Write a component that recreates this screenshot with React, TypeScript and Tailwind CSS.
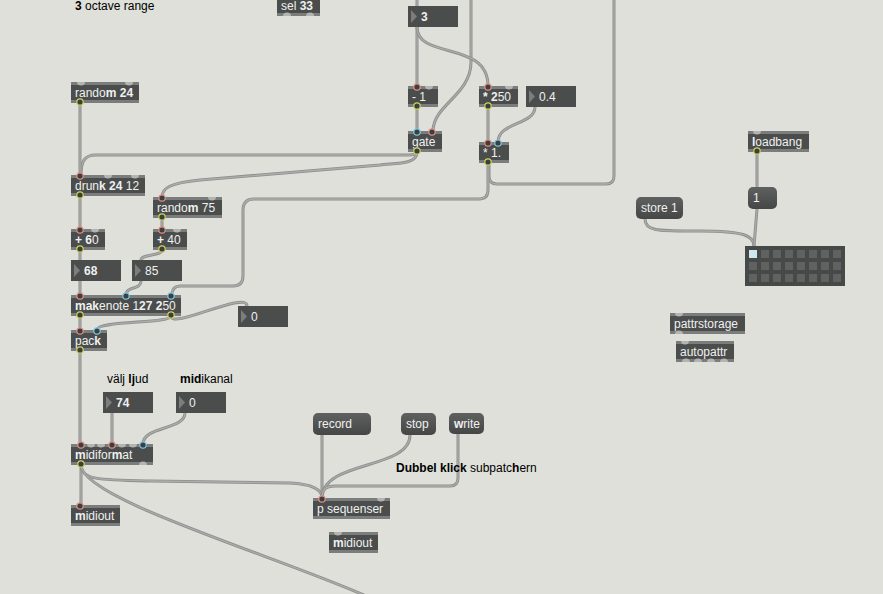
import React from 'react';

type Port = [number, 'g' | 'r' | 'b' | 'y'];

type Node = {
  x: number;
  y: number;
  w: number;
  h?: number;
  kind: 'obj' | 'num' | 'msg';
  label: React.ReactNode;
  ins?: Port[];
  outs?: Port[];
};

const B = ({ children }: { children: React.ReactNode }) => <span className="font-bold">{children}</span>;

const nodes: Node[] = [
  { x: 277, y: -5, w: 43, kind: 'obj', label: <>sel <B>33</B></>, outs: [[287, 'g'], [310, 'g']] },
  { x: 408, y: 6, w: 50, kind: 'num', label: <B>3</B> },
  { x: 408, y: 86, w: 30, kind: 'obj', label: <>- 1</>, ins: [[417, 'r'], [429, 'g']], outs: [[417, 'y']] },
  { x: 479, y: 86, w: 39, kind: 'obj', label: <><B>* 2</B>50</>, ins: [[488, 'r'], [509, 'g']], outs: [[488, 'y']] },
  { x: 526, y: 86, w: 50, kind: 'num', label: <>0.4</> },
  { x: 408, y: 131, w: 34, kind: 'obj', label: <>gate</>, ins: [[417, 'b'], [432, 'r']], outs: [[417, 'y']] },
  { x: 479, y: 142, w: 30, kind: 'obj', label: <>* 1.</>, ins: [[488, 'r'], [498, 'b']], outs: [[488, 'y']] },
  { x: 71, y: 82, w: 68, kind: 'obj', label: <>rando<B>m 24</B></>, ins: [[81, 'g'], [129, 'g']], outs: [[80, 'y']] },
  { x: 71, y: 175, w: 74, kind: 'obj', label: <>drun<B>k 24</B> 12</>, ins: [[80, 'r'], [108, 'g'], [135, 'g']], outs: [[80, 'y']] },
  { x: 153, y: 197, w: 69, kind: 'obj', label: <>rando<B>m</B> 75</>, ins: [[162, 'r'], [212, 'g']], outs: [[162, 'y']] },
  { x: 71, y: 229, w: 34, kind: 'obj', label: <><B>+ 6</B>0</>, ins: [[80, 'r'], [95, 'g']], outs: [[80, 'y']] },
  { x: 153, y: 229, w: 34, kind: 'obj', label: <><B>+</B> 40</>, ins: [[162, 'r'], [177, 'g']], outs: [[162, 'y']] },
  { x: 71, y: 260, w: 50, kind: 'num', label: <B>68</B> },
  { x: 132, y: 260, w: 50, kind: 'num', label: <>85</> },
  { x: 71, y: 295, w: 110, kind: 'obj', label: <><B>mak</B>enote 1<B>27 2</B>50</>, ins: [[80, 'r'], [126, 'b'], [171, 'b']], outs: [[80, 'y'], [171, 'y']] },
  { x: 238, y: 306, w: 50, kind: 'num', label: <>0</> },
  { x: 71, y: 330, w: 36, kind: 'obj', label: <>pac<B>k</B></>, ins: [[80, 'r'], [97, 'b']], outs: [[80, 'y']] },
  { x: 103, y: 392, w: 50, kind: 'num', label: <B>74</B> },
  { x: 176, y: 392, w: 50, kind: 'num', label: <>0</> },
  {
    x: 71, y: 444, w: 82, kind: 'obj', label: <><B>m</B>idifor<B>m</B>at</>,
    ins: [[81, 'r'], [91, 'g'], [101, 'g'], [112, 'r'], [122, 'g'], [133, 'g'], [143, 'b']],
    outs: [[81, 'y'], [143, 'g']],
  },
  { x: 71, y: 505, w: 49, kind: 'obj', label: <><B>m</B>idiout</>, ins: [[80, 'r']] },
  { x: 313, y: 413, w: 58, h: 22, kind: 'msg', label: <>record</> },
  { x: 401, y: 413, w: 35, h: 22, kind: 'msg', label: <>stop</> },
  { x: 449, y: 413, w: 35, h: 21, kind: 'msg', label: <><B>w</B>rite</> },
  { x: 313, y: 498, w: 77, kind: 'obj', label: <>p sequenser</>, ins: [[322, 'r'], [381, 'g']] },
  { x: 329, y: 532, w: 49, kind: 'obj', label: <><B>m</B>idiout</>, ins: [[338, 'g']] },
  { x: 748, y: 131, w: 61, kind: 'obj', label: <><B>l</B>oadbang</>, ins: [[757, 'g']], outs: [[757, 'y']] },
  { x: 748, y: 187, w: 29, h: 22, kind: 'msg', label: <>1</> },
  { x: 636, y: 197, w: 47, h: 22, kind: 'msg', label: <>store 1</> },
  { x: 670, y: 313, w: 75, kind: 'obj', label: <>pattrstorage</>, ins: [[679, 'g']], outs: [[679, 'g']] },
  { x: 676, y: 341, w: 58, kind: 'obj', label: <>autopattr</>, ins: [[685, 'g']], outs: [[686, 'g'], [698, 'g'], [711, 'g'], [724, 'g']] },
];

const cables = [
  'M417 -5 L417 6',
  'M471 -5 L471 62 C471 95 433 105 433 131',
  'M614 -5 L614 176 Q614 184 606 184 L497 184 Q489 184 489 176 L489 163',
  'M417 27 L417 86',
  'M417 27 C417 60 488 40 488 86',
  'M417 107 L417 131',
  'M488 107 L488 142',
  'M535 107 C535 125 498 122 498 142',
  'M488 163 L488 190 Q488 199 479 199 L254 199 Q243 199 243 210 L243 276 Q243 286 233 286 L180 286 Q172 286 172 295',
  'M417 152 C417 156 405 155 400 155 L96 155 C84 155 81 162 81 175',
  'M417 152 C417 165 395 163 380 165 L200 180 C170 183 162 188 162 197',
  'M80 103 L80 175',
  'M80 196 L80 229',
  'M80 250 L80 260',
  'M162 218 L162 229',
  'M162 250 C162 256 141 254 141 260',
  'M80 281 L80 295',
  'M141 281 C141 290 126 286 126 295',
  'M80 316 L80 330',
  'M171 316 C171 324 97 320 97 330',
  'M171 316 C171 330 247 290 247 306',
  'M80 351 L80 444',
  'M112 413 L112 444',
  'M185 413 C185 430 143 426 143 444',
  'M81 465 L81 505',
  'M81 465 C81 480 100 480 150 481 L290 483 C310 484 322 488 322 498',
  'M81 465 C81 500 290 560 375 600',
  'M322 435 L322 498',
  'M410 435 C410 470 322 460 322 498',
  'M458 434 L458 478 Q458 486 450 486 L335 486 C325 486 322 490 322 498',
  'M645 219 C645 232 660 231 700 231 C745 231 754 236 754 246',
  'M757 209 L754 246',
  'M757 152 L757 187',
];

const portColor = { r: '#e3938c', b: '#7ccbe6', y: '#cdd35a', g: '#b4b5b3' };

function Box({ n }: { n: Node }) {
  const h = n.h ?? 21;
  const font = { fontFamily: '"Liberation Sans", Arial, sans-serif' };
  if (n.kind === 'msg') {
    return (
      <div
        className="absolute flex items-center rounded-[5px] bg-linear-to-b from-[#5e6160] to-[#444746] pl-[5px] text-[12px] leading-none text-[#f0f0f0]"
        style={{ left: n.x, top: n.y, width: n.w, height: h, ...font }}
      >
        <span className="whitespace-pre">{n.label}</span>
      </div>
    );
  }
  if (n.kind === 'num') {
    return (
      <div
        className="absolute flex items-center bg-[#4a4d4c] text-[12px] leading-none text-[#f0f0f0]"
        style={{ left: n.x, top: n.y, width: n.w, height: h, ...font }}
      >
        <svg width="13" height="21" className="shrink-0">
          <polygon points="3,4 9,10.5 3,17" fill="#7b7e7d" />
        </svg>
        <span className="whitespace-pre">{n.label}</span>
      </div>
    );
  }
  return (
    <div
      className="absolute flex flex-col bg-[#4a4d4c] text-[12px] leading-none text-[#f0f0f0]"
      style={{ left: n.x, top: n.y, width: n.w, height: h, ...font }}
    >
      <div className="h-[3px] bg-[#7b7d7c]" />
      <div className="flex flex-1 items-center pl-[4px]">
        <span className="whitespace-pre">{n.label}</span>
      </div>
      <div className="h-[3px] bg-[#7b7d7c]" />
    </div>
  );
}

function Ports() {
  return (
    <svg className="pointer-events-none absolute inset-0" width={883} height={594}>
      {nodes.map((n, i) => {
        const h = n.h ?? 21;
        return (
          <g key={i}>
            {(n.ins ?? []).map(([x, c], j) =>
              c === 'g' ? (
                <path key={'i' + j} d={`M${x - 4} ${n.y} A4 3.5 0 0 0 ${x + 4} ${n.y} Z`} fill={portColor.g} />
              ) : (
                <circle key={'i' + j} cx={x} cy={n.y + 1} r={3.2} fill="#3d3f3e" stroke={portColor[c]} strokeWidth={1.2} />
              )
            )}
            {(n.outs ?? []).map(([x, c], j) =>
              c === 'g' ? (
                <path key={'o' + j} d={`M${x - 4} ${n.y + h} A4 3.5 0 0 1 ${x + 4} ${n.y + h} Z`} fill={portColor.g} />
              ) : (
                <circle key={'o' + j} cx={x} cy={n.y + h - 1} r={3.2} fill="#3d3f3e" stroke={portColor[c]} strokeWidth={1.2} />
              )
            )}
          </g>
        );
      })}
    </svg>
  );
}

function Preset() {
  const cells = Array.from({ length: 24 }, (_, i) => i);
  return (
    <div className="absolute grid grid-cols-8 gap-[4px] bg-[#464948] p-[4px]" style={{ left: 745, top: 246, width: 100, height: 40 }}>
      {cells.map((i) => (
        <div key={i} className={i === 0 ? 'h-[8px] w-[8px] bg-[#cfe6ee]' : 'h-[8px] w-[8px] bg-[#5f6261]'} />
      ))}
    </div>
  );
}

export default function App() {
  const font = { fontFamily: '"Liberation Sans", Arial, sans-serif' };
  return (
    <div className="relative h-[594px] w-[883px] overflow-hidden bg-[#dfe0da]">
      <svg className="absolute inset-0" width={883} height={594}>
        {cables.map((d, i) => (
          <g key={i} fill="none" strokeLinecap="round">
            <path d={d} stroke="#8d8e8c" strokeWidth={3} />
            <path d={d} stroke="#acadab" strokeWidth={1.3} />
          </g>
        ))}
      </svg>

      {nodes.map((n, i) => (
        <Box key={i} n={n} />
      ))}
      <Preset />
      <Ports />

      <div className="absolute text-[12px] leading-[14px] text-black" style={{ left: 75, top: -1, ...font }}>
        <B>3</B> octave range
      </div>
      <div className="absolute text-[12px] leading-[14px] text-black" style={{ left: 107, top: 372, ...font }}>
        välj <B>lj</B>ud
      </div>
      <div className="absolute text-[12px] leading-[14px] text-black" style={{ left: 180, top: 372, ...font }}>
        <B>mid</B>ikanal
      </div>
      <div className="absolute text-[12px] leading-[14px] text-black" style={{ left: 396, top: 461, ...font }}>
        <B>Dubbel klick</B> subpatc<B>h</B>ern
      </div>
    </div>
  );
}
